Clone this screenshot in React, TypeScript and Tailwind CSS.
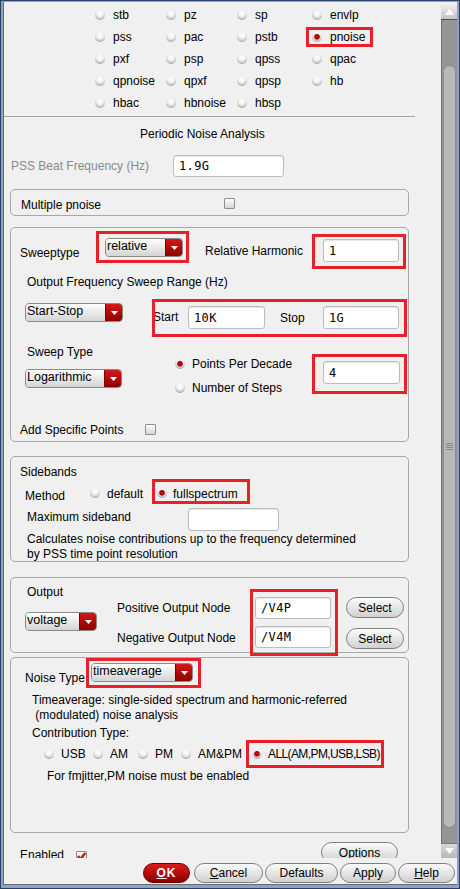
import React from "react";

function Radio({ on = false }: { on?: boolean }) {
  return (
    <svg width="10" height="10" viewBox="0 0 10 10" className="block shrink-0">
      <defs>
        <radialGradient id="rgsphere" cx="0.5" cy="0.32" r="0.72">
          <stop offset="0" stopColor="#ffffff" />
          <stop offset="0.45" stopColor="#f2f2f2" />
          <stop offset="0.8" stopColor="#c4c4c4" />
          <stop offset="1" stopColor="#8e8e8e" />
        </radialGradient>
      </defs>
      <circle cx="5" cy="5" r="4.9" fill="url(#rgsphere)" />
      {on && <circle cx="5" cy="4.8" r="2.5" fill="#d00000" stroke="#6e0000" strokeWidth="0.7" />}
    </svg>
  );
}

function Check({ on = false, className = "" }: { on?: boolean; className?: string }) {
  return (
    <div className={"relative w-[11px] h-[11px] shrink-0 border border-[#8e8e8e] rounded-[1px] bg-linear-to-b from-[#fdfdfd] to-[#d6d6d6] " + className}>
      {on && (
        <svg width="11" height="11" viewBox="0 0 11 11" className="absolute -left-[1px] -top-[1px]">
          <path d="M2 5 L4.6 8 L9.2 2" fill="none" stroke="#d01010" strokeWidth="2.4" />
        </svg>
      )}
    </div>
  );
}

function Dropdown({ label, className = "" }: { label: string; className?: string }) {
  return (
    <div className={"flex h-[19px] shrink-0 rounded-[4px] border border-[#8a8a8a] overflow-hidden " + className}>
      <div className="flex-1 bg-linear-to-b from-[#ffffff] to-[#d4d4d4] pl-[1px] text-[12.5px] leading-[15px] overflow-hidden whitespace-nowrap">{label}</div>
      <div className="w-[17px] bg-linear-to-b from-[#d81818] to-[#8e0000] flex items-center justify-center border-l border-[#7a0000]">
        <svg width="7" height="4" viewBox="0 0 7 4">
          <path d="M0 0 L7 0 L3.5 4 Z" fill="#ffffff" />
        </svg>
      </div>
    </div>
  );
}

function Input({ value = "", className = "" }: { value?: string; className?: string }) {
  return (
    <div className={"shrink-0 bg-white border border-[#bcbcbc] rounded-[3px] shadow-[inset_0_1px_1px_rgba(0,0,0,0.10)] font-['DejaVu_Sans_Mono',monospace] text-[12px] tracking-[0.4px] pl-[5px] flex items-center " + className}>
      {value}
    </div>
  );
}

function Btn({ children, className = "" }: { children: React.ReactNode; className?: string }) {
  return (
    <div className={"shrink-0 rounded-full border border-[#7e7e7e] bg-linear-to-b from-[#fcfcfc] to-[#d0d0d0] flex items-center justify-center text-[12px] " + className}>
      {children}
    </div>
  );
}

function Box({ children, className = "" }: { children: React.ReactNode; className?: string }) {
  return (
    <div className={"ml-[6px] w-[399px] shrink-0 border border-[#a8a8a8] rounded-[5px] " + className}>{children}</div>
  );
}

function RedBox({ className }: { className: string }) {
  return <div className={"absolute border-[3px] border-[#e8202a] pointer-events-none " + className} />;
}

const grid: string[][] = [
  ["stb", "pz", "sp", "envlp"],
  ["pss", "pac", "pstb", "pnoise"],
  ["pxf", "psp", "qpss", "qpac"],
  ["qpnoise", "qpxf", "qpsp", "hb"],
  ["hbac", "hbnoise", "hbsp", ""],
];

function Content() {
  return (
    <div className="relative w-[437px] h-[856px] shrink-0 overflow-hidden flex flex-col">
      {/* analysis radio grid */}
      <div className="mt-[2px] ml-[91px] grid grid-cols-[71px_71px_75px_80px]">
        {grid.flat().map((name, i) => (
          <div key={i} className="h-[22px] flex items-center">
            {name && (
              <>
                <Radio on={name === "pnoise"} />
                <span className="ml-[8px]">{name}</span>
              </>
            )}
          </div>
        ))}
      </div>
      <div className="mt-[2px] h-[1px] w-[411px] bg-[#a6a6a6] shrink-0" />
      <div className="mt-[6px] h-[22px] flex items-center pl-[136px] shrink-0">Periodic Noise Analysis</div>
      <div className="mt-[10px] h-[22px] flex items-center pl-[7px] shrink-0">
        <span className="w-[162px] text-[#8a8a8a]">PSS Beat Frequency (Hz)</span>
        <Input value="1.9G" className="w-[111px] h-[22px]" />
      </div>

      {/* Multiple pnoise */}
      <Box className="mt-[12px] h-[27px] flex items-start">
        <span className="ml-[10px] mt-[7px] w-[203px]">Multiple pnoise</span>
        <Check className="mt-[8px]" />
      </Box>

      {/* Sweep box */}
      <Box className="mt-[11px] h-[215px] flex flex-col">
        <div className="flex items-start h-[42px] shrink-0">
          <span className="ml-[9px] mt-[17px] w-[85px]">Sweeptype</span>
          <Dropdown label="relative" className="mt-[10px] w-[78px]" />
          <span className="ml-[22px] mt-[15px] w-[118px]">Relative Harmonic</span>
          <Input value="1" className="mt-[11px] w-[76px] h-[23px]" />
        </div>
        <div className="mt-[4px] ml-[16px] h-[16px] shrink-0">Output Frequency Sweep Range (Hz)</div>
        <div className="flex items-start h-[43px] shrink-0">
          <Dropdown label="Start-Stop" className="ml-[14px] mt-[13px] w-[98px]" />
          <span className="ml-[30px] mt-[19px] w-[35px]">Start</span>
          <Input value="10K" className="mt-[16px] w-[77px] h-[23px]" />
          <span className="ml-[15px] mt-[20px] w-[43px]">Stop</span>
          <Input value="1G" className="mt-[16px] w-[76px] h-[23px]" />
        </div>
        <div className="flex items-start h-[67px] shrink-0">
          <div className="ml-[14px] w-[97px] flex flex-col">
            <span className="mt-[11px] ml-[2px]">Sweep Type</span>
            <Dropdown label="Logarithmic" className="mt-[9px] w-[97px]" />
          </div>
          <div className="ml-[53px] w-[148px] mt-[19px] flex flex-col">
            <div className="h-[24px] flex items-center">
              <Radio on />
              <span className="ml-[7px]">Points Per Decade</span>
            </div>
            <div className="h-[24px] flex items-center">
              <Radio />
              <span className="ml-[7px]">Number of Steps</span>
            </div>
          </div>
          <Input value="4" className="mt-[28px] w-[77px] h-[23px]" />
        </div>
        <div className="mt-[22px] flex items-start shrink-0">
          <span className="ml-[9px] w-[125px]">Add Specific Points</span>
          <Check className="mt-[2px]" />
        </div>
      </Box>

      {/* Sidebands */}
      <Box className="mt-[14px] h-[106px] flex flex-col">
        <span className="ml-[9px] mt-[7px] h-[16px]">Sidebands</span>
        <div className="flex items-start h-[26px] shrink-0">
          <span className="ml-[14px] mt-[8px] w-[65px]">Method</span>
          <div className="mt-[8px]"><Radio /></div>
          <span className="ml-[7px] mt-[6px] w-[50px]">default</span>
          <div className="mt-[8px]"><Radio on /></div>
          <span className="ml-[6px] mt-[6px]">fullspectrum</span>
        </div>
        <div className="flex items-start h-[25px] shrink-0">
          <span className="ml-[16px] mt-[3px] w-[161px]">Maximum sideband</span>
          <Input className="mt-[2px] w-[91px] h-[23px]" />
        </div>
        <div className="mt-[1px] ml-[16px] leading-[15px]">
          <div>Calculates noise contributions up to the frequency determined</div>
          <div>by PSS time point resolution</div>
        </div>
      </Box>

      {/* Output */}
      <Box className="mt-[15px] h-[76px] flex items-start">
        <div className="ml-[14px] w-[72px] flex flex-col">
          <span className="mt-[6px] ml-[2px]">Output</span>
          <Dropdown label="voltage" className="mt-[12px] w-[72px]" />
        </div>
        <div className="ml-[20px] w-[138px] flex flex-col">
          <span className="mt-[22px]">Positive Output Node</span>
          <span className="mt-[14px]">Negative Output Node</span>
        </div>
        <div className="w-[76px] flex flex-col">
          <Input value="/V4P" className="mt-[19px] w-[76px] h-[22px]" />
          <Input value="/V4M" className="mt-[7px] w-[76px] h-[22px]" />
        </div>
        <div className="ml-[15px] w-[58px] flex flex-col">
          <Btn className="mt-[19px] h-[21px] w-[58px]">Select</Btn>
          <Btn className="mt-[10px] h-[21px] w-[58px]">Select</Btn>
        </div>
      </Box>

      {/* Noise type */}
      <Box className="mt-[4px] h-[176px] flex flex-col">
        <div className="flex items-start h-[28px] shrink-0">
          <span className="ml-[14px] mt-[12px] w-[66px]">Noise Type</span>
          <Dropdown label="timeaverage" className="mt-[5px] w-[102px]" />
        </div>
        <div className="mt-[7px] ml-[21px] leading-[15px]">
          <div>Timeaverage: single-sided spectrum and harmonic-referred</div>
          <div className="whitespace-pre"> (modulated) noise analysis</div>
        </div>
        <div className="mt-[2px] ml-[21px] h-[16px]">Contribution Type:</div>
        <div className="mt-[2px] ml-[33px] h-[22px] flex items-center shrink-0">
          <div className="w-[49px] flex items-center"><Radio /><span className="ml-[7px]">USB</span></div>
          <div className="w-[45px] flex items-center"><Radio /><span className="ml-[7px]">AM</span></div>
          <div className="w-[43px] flex items-center"><Radio /><span className="ml-[7px]">PM</span></div>
          <div className="w-[71px] flex items-center"><Radio /><span className="ml-[7px]">AM&amp;PM</span></div>
          <div className="flex items-center"><Radio on /><span className="ml-[6px] tracking-[-0.6px]">ALL(AM,PM,USB,LSB)</span></div>
        </div>
        <div className="mt-[3px] ml-[36px] h-[16px]">For fmjitter,PM noise must be enabled</div>
      </Box>

      {/* Enabled row */}
      <div className="flex items-start shrink-0">
        <span className="ml-[16px] mt-[14px] w-[56px]">Enabled</span>
        <Check on className="mt-[18px]" />
        <Btn className="ml-[234px] mt-[9px] w-[77px] h-[21px]">Options</Btn>
      </div>

      {/* annotation boxes */}
      <RedBox className="left-[302px] top-[25px] w-[67px] h-[20px]" />
      <RedBox className="left-[92px] top-[229px] w-[93px] h-[32px]" />
      <RedBox className="left-[308px] top-[232px] w-[94px] h-[35px]" />
      <RedBox className="left-[148px] top-[297px] w-[255px] h-[38px]" />
      <RedBox className="left-[308px] top-[352px] w-[95px] h-[40px]" />
      <RedBox className="left-[148px] top-[477px] w-[98px] h-[25px]" />
      <RedBox className="left-[246px] top-[587px] w-[88px] h-[67px]" />
      <RedBox className="left-[82px] top-[656px] w-[115px] h-[30px]" />
      <RedBox className="left-[242px] top-[738px] w-[138px] h-[28px]" />
    </div>
  );
}

function ScrollBar() {
  return (
    <div className="w-[16px] h-[856px] shrink-0 flex flex-col pt-[3px]">
      <div className="h-[15px] shrink-0 bg-linear-to-b from-[#ececec] to-[#c4c4c4] border-b border-[#505050] flex items-center justify-center">
        <svg width="9" height="6" viewBox="0 0 9 6"><path d="M0 6 L4.5 0 L9 6 Z" fill="#ffffff" /></svg>
      </div>
      <div className="flex-1 bg-[#959595] border-l border-[#707070] flex flex-col">
        <div className="mt-[45px] h-[763px] mx-[1px] rounded-[7px] bg-[#b8b8b8] border border-[#8c8c8c] flex items-center justify-center">
          <div className="flex flex-col gap-[1px]">
            <div className="w-[7px] h-[1px] bg-[#8a8a8a]" />
            <div className="w-[7px] h-[1px] bg-[#8a8a8a]" />
            <div className="w-[7px] h-[1px] bg-[#8a8a8a]" />
            <div className="w-[7px] h-[1px] bg-[#8a8a8a]" />
          </div>
        </div>
      </div>
      <div className="h-[15px] shrink-0 bg-linear-to-b from-[#d8d8d8] to-[#b8b8b8] border-t border-[#7a7a7a] flex items-center justify-center">
        <svg width="9" height="6" viewBox="0 0 9 6"><path d="M0 0 L9 0 L4.5 6 Z" fill="#ffffff" /></svg>
      </div>
    </div>
  );
}

export default function App() {
  return (
    <div className="w-[460px] h-[889px] bg-[#8ea3c4] border border-[#2d4166] pt-[1px] pl-[2px] pr-[2px] pb-[3px] font-['Liberation_Sans',Arial,sans-serif] text-[12px] leading-[16px] text-black overflow-hidden">
      <div className="w-full h-full bg-[#f0f0f0] border-l border-b border-[#6b6b6b] flex flex-col">
        <div className="flex h-[856px] shrink-0">
          <Content />
          <ScrollBar />
        </div>
        <div className="h-[26px] flex items-start shrink-0">
          <div className="ml-[139px] mt-[5px] w-[47px] h-[20px] rounded-full border border-[#6a0000] bg-linear-to-b from-[#dd1a1a] to-[#8c0000] flex items-center justify-center text-white font-bold text-[12px] tracking-[1px]">
            <span><span className="underline">O</span>K</span>
          </div>
          <Btn className="ml-[4px] mt-[5px] w-[69px] h-[20px]"><span><span className="underline">C</span>ancel</span></Btn>
          <Btn className="ml-[2px] mt-[5px] w-[73px] h-[20px]">Defaults</Btn>
          <Btn className="ml-[2px] mt-[5px] w-[56px] h-[20px]">Apply</Btn>
          <Btn className="ml-[2px] mt-[5px] w-[57px] h-[20px]"><span><span className="underline">H</span>elp</span></Btn>
        </div>
      </div>
    </div>
  );
}
